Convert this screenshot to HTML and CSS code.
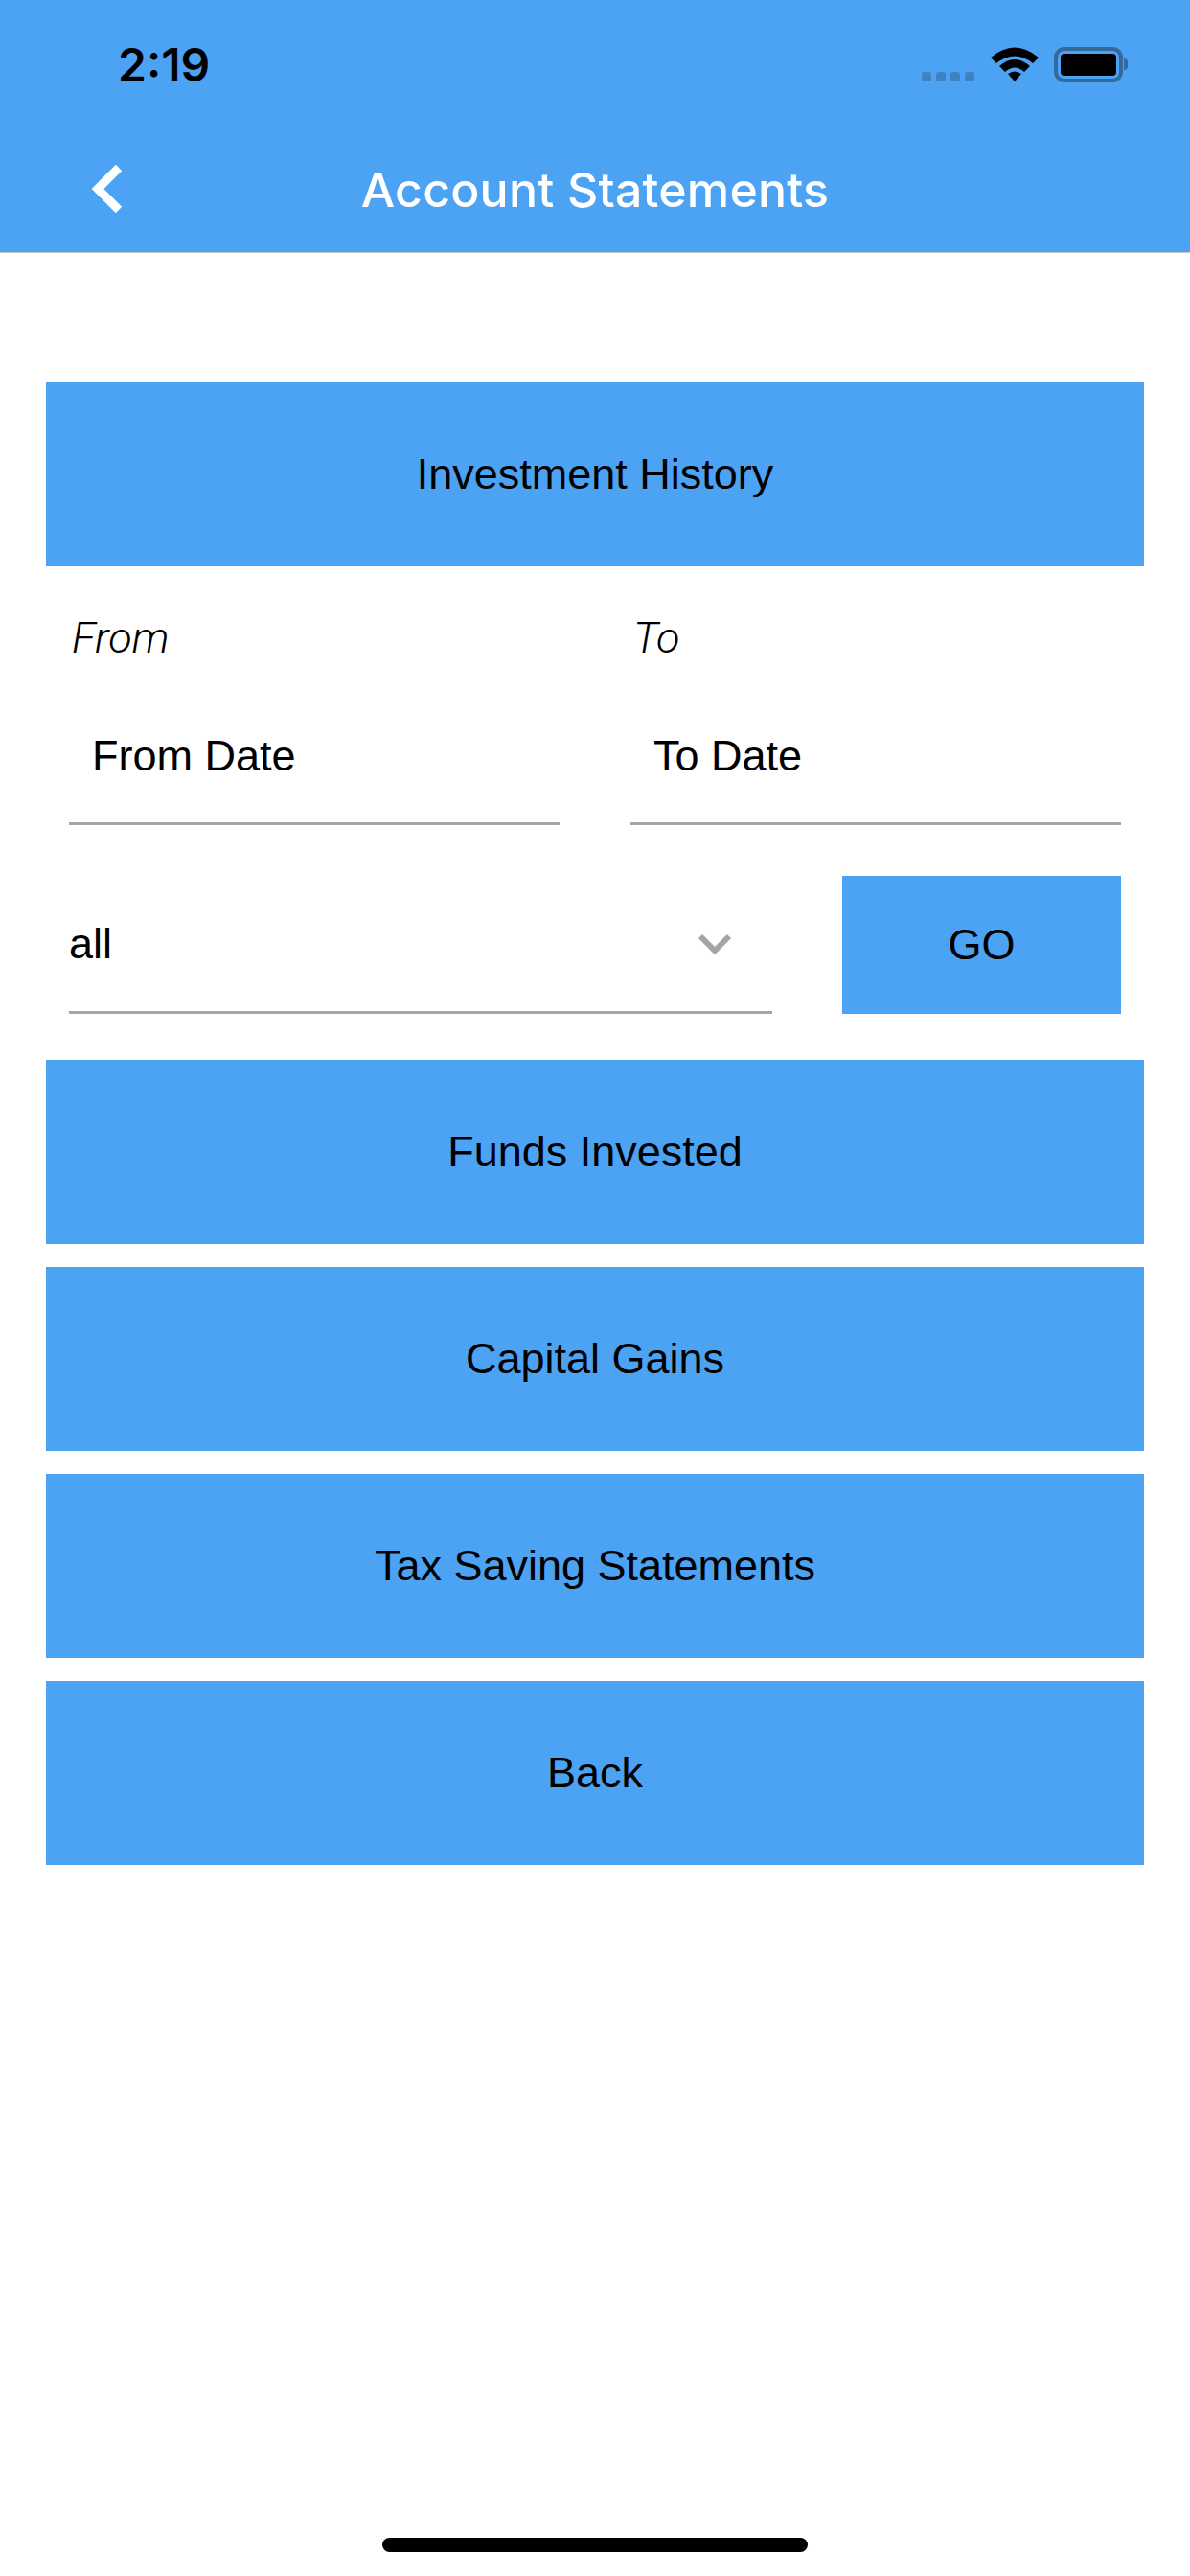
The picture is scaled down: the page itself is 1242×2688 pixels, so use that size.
FILE: index.html
```html
<!DOCTYPE html>
<html lang="en">
<head>
  <meta charset="UTF-8">
  <meta name="viewport" content="width=device-width, initial-scale=1.0">
  <title>Account Statements</title>
  <link rel="stylesheet" href="styles.css">
</head>
<body>
  <header class="header">
    <div class="status-bar">
      <span class="time">2:19</span>
      <div class="status-icons">
        <div class="signal"><i></i><i></i><i></i><i></i></div>
        <svg class="wifi" width="50" height="36" viewBox="0 0 50 36">
          <path d="M0 11 Q25 -10 50 11 L44 17 Q25 2 6 17 Z"/>
          <path d="M9 20 Q25 6 41 20 L35 26 Q25 17 15 26 Z"/>
          <path d="M18 28 Q25 23 32 28 L25 36 Z"/>
        </svg>
        <div class="battery"><div class="battery-fill"></div></div>
        <div class="battery-cap"></div>
      </div>
    </div>
    <div class="nav-bar">
      <svg class="back" width="40" height="54" viewBox="0 0 40 54">
        <path d="M32 5 L10 27 L32 49" fill="none" stroke="#fff" stroke-width="9"/>
      </svg>
      <h1 class="title">Account Statements</h1>
    </div>
  </header>

  <main class="content">
    <button class="btn">Investment History</button>

    <div class="dates">
      <div class="date-col">
        <label class="date-label">From</label>
        <div class="date-input">From Date</div>
      </div>
      <div class="date-col">
        <label class="date-label">To</label>
        <div class="date-input">To Date</div>
      </div>
    </div>

    <div class="filter">
      <div class="select">
        <span>all</span>
        <svg class="chevron" width="36" height="22" viewBox="0 0 36 22">
          <path d="M3 3 L18 18 L33 3" fill="none" stroke="#a5a5a5" stroke-width="6"/>
        </svg>
      </div>
      <button class="go">GO</button>
    </div>

    <div class="btn-list">
      <button class="btn">Funds Invested</button>
      <button class="btn">Capital Gains</button>
      <button class="btn">Tax Saving Statements</button>
      <button class="btn">Back</button>
    </div>
  </main>

  <div class="home-bar"></div>
</body>
</html>
```

FILE: styles.css
```css
html, body {
  margin: 0;
  height: 2688px;
  background-color: #fff;
}
body {
  display: flex;
  flex-direction: column;
  font-family: "Liberation Sans", Arial, sans-serif;
  color: #000;
}

.header {
  height: 264px;
  background-color: #4ca2f3;
  border-bottom: 1px solid #c4c4c4;
  box-sizing: border-box;
}
.status-bar {
  height: 132px;
  display: flex;
  align-items: center;
  justify-content: space-between;
  padding: 2px 65px 0 123px;
  box-sizing: border-box;
}
.time {
  font-family: Inter, sans-serif;
  font-size: 48px;
  font-weight: 600;
}
.status-icons {
  display: flex;
  align-items: center;
}
.signal {
  display: flex;
  gap: 5px;
  margin: 26px 17px 0 0;
}
.signal i {
  width: 10px;
  height: 10px;
  border-radius: 3px;
  background-color: #3e82c2;
}
.wifi {
  margin-right: 16px;
}
.battery {
  width: 72px;
  height: 37px;
  box-sizing: border-box;
  border: 4px solid #33699d;
  border-radius: 11px;
  padding: 3px;
}
.battery-fill {
  height: 100%;
  background-color: #000;
  border-radius: 4px;
}
.battery-cap {
  width: 4px;
  height: 12px;
  margin-left: 1px;
  background-color: #33699d;
  border-radius: 0 6px 6px 0;
}

.nav-bar {
  position: relative;
  height: 131px;
  display: flex;
  align-items: center;
  justify-content: center;
}
.back {
  position: absolute;
  left: 92px;
  top: 38px;
}
.title {
  margin: 0;
  font-family: Inter, sans-serif;
  font-size: 50px;
  font-weight: 500;
  letter-spacing: 0.2px;
  color: #fff;
}

.content {
  padding: 135px 48px 0;
}
.btn {
  display: block;
  width: 100%;
  height: 192px;
  padding: 0;
  border: none;
  background-color: #4ca2f3;
  font-family: inherit;
  font-size: 45px;
  color: #000;
}

.dates {
  display: flex;
  gap: 74px;
  padding: 0 24px;
  margin-top: 49px;
}
.date-col {
  flex: 1;
}
.date-label {
  display: block;
  font-family: Roboto, sans-serif;
  font-size: 45px;
  font-style: italic;
  font-weight: 300;
  line-height: 52px;
  margin-left: 3px;
}
.date-input {
  height: 112px;
  margin-top: 57px;
  padding: 14px 0 0 24px;
  box-sizing: border-box;
  border-bottom: 3px solid #a5a5a5;
  font-size: 45px;
  line-height: 52px;
}

.filter {
  display: flex;
  justify-content: space-between;
  padding: 0 24px;
  margin-top: 53px;
}
.select {
  width: 734px;
  height: 144px;
  box-sizing: border-box;
  border-bottom: 3px solid #a5a5a5;
  display: flex;
  align-items: center;
  justify-content: space-between;
  padding-right: 42px;
  font-size: 45px;
}
.go {
  width: 291px;
  height: 144px;
  border: none;
  padding: 0;
  background-color: #4ca2f3;
  font-family: inherit;
  font-size: 45px;
  color: #000;
}

.btn-list {
  display: flex;
  flex-direction: column;
  gap: 24px;
  margin-top: 48px;
}

.home-bar {
  width: 444px;
  height: 15px;
  margin: auto auto 25px;
  border-radius: 8px;
  background-color: #000;
}
```
